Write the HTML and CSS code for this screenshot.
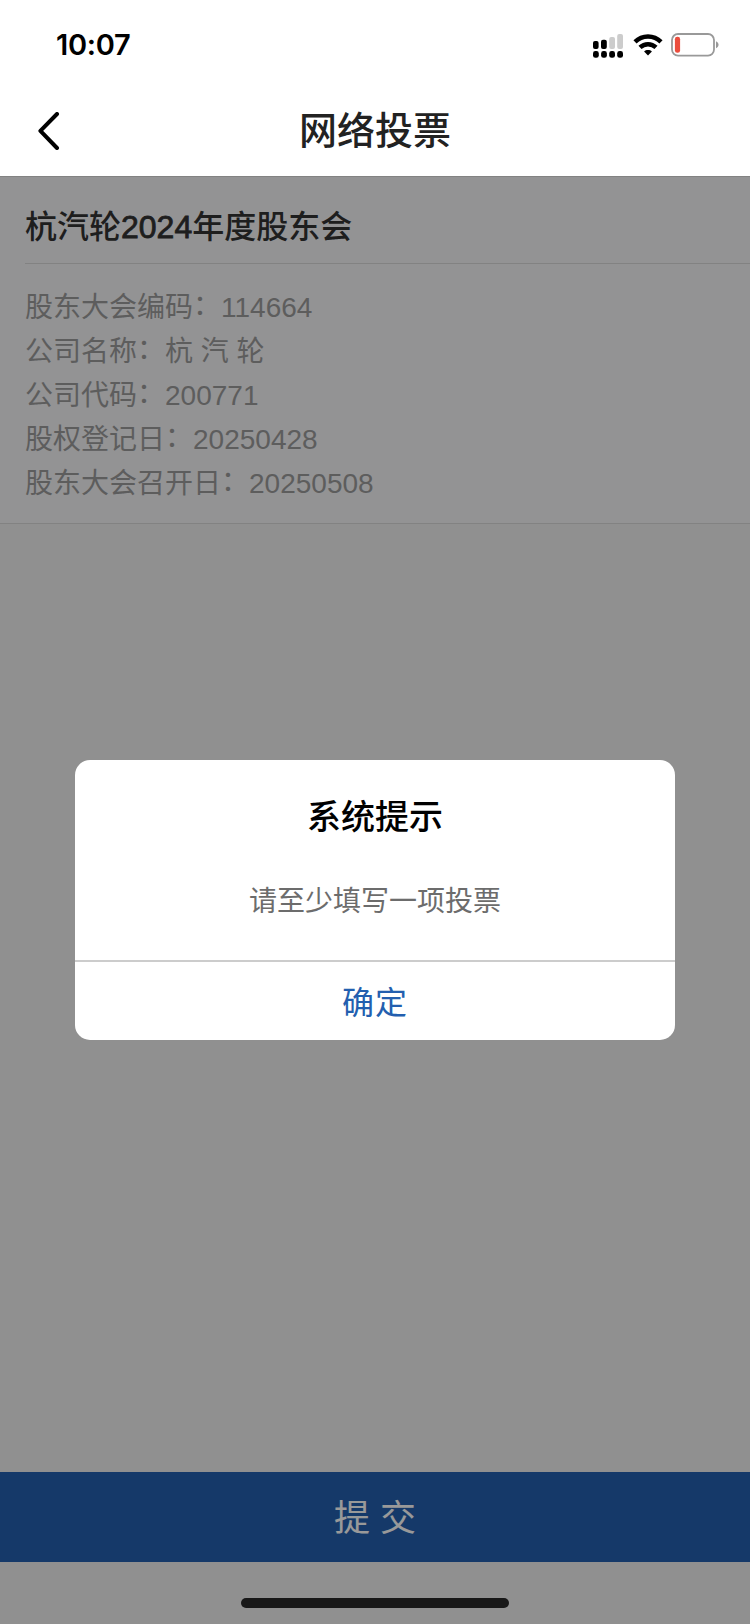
FILE: index.html
```html
<!DOCTYPE html>
<html lang="zh-CN">
<head>
    <meta charset="UTF-8">
    <meta name="viewport" content="width=device-width, initial-scale=1.0">
    <title>网络投票</title>
    <link rel="stylesheet" href="styles.css">
</head>
<body>
    <header class="header">
        <div class="status-bar">
            <span class="time">10:07</span>
            <div class="status-icons">
                <svg class="signal" width="30" height="24" viewBox="0 0 30 24">
                    <g fill="#000">
                        <rect x="0" y="7" width="5.6" height="8" rx="2"/>
                        <rect x="8" y="5.7" width="5.8" height="9.3" rx="2"/>
                        <rect x="0" y="17" width="5.8" height="6.8" rx="2.4"/>
                        <rect x="8.1" y="17" width="5.8" height="6.8" rx="2.4"/>
                        <rect x="16.2" y="17" width="5.8" height="6.8" rx="2.4"/>
                        <rect x="24.2" y="17" width="5.8" height="6.8" rx="2.4"/>
                    </g>
                    <g fill="#ccc">
                        <rect x="16.2" y="3" width="5.8" height="12" rx="2"/>
                        <rect x="24.2" y="0" width="5.8" height="15" rx="2"/>
                    </g>
                </svg>
                <svg class="wifi" width="30" height="22" viewBox="0 0 30 22">
                    <g fill="none" stroke="#000" stroke-width="4.4">
                        <path d="M2 7.9C9.2 .7 20.8 .7 28 7.9"/>
                        <path d="M7 13.4C11.5 9.1 18.5 9.1 23 13.4"/>
                    </g>
                    <path d="M15 21.4l-3.9-3.9c2.1-1.9 5.7-1.9 7.8 0z"/>
                </svg>
                <svg class="battery" width="48" height="24" viewBox="0 0 48 24">
                    <rect x="1" y="1" width="42" height="21.6" rx="6" fill="none" stroke="#999" stroke-width="1.8"/>
                    <rect x="3.9" y="3.8" width="5.2" height="16" rx="2.4" fill="#eb4d3d"/>
                    <path d="M45 8.2c3.4 1.4 3.4 5.6 0 7z" fill="#999"/>
                </svg>
            </div>
        </div>
        <div class="nav-bar">
            <svg class="back" width="22" height="38" viewBox="0 0 22 38">
                <path d="M19 2L2.4 18.8L19 36" fill="none" stroke="#000" stroke-width="4" stroke-linecap="round" stroke-linejoin="round"/>
            </svg>
            <h1>网络投票</h1>
        </div>
    </header>

    <main class="content">
        <section class="meeting">
            <h2>杭汽轮<span class="year">2024</span>年度股东会</h2>
            <ul class="info">
                <li>股东大会编码<i>：</i>114664</li>
                <li>公司名称<i>：</i>杭 汽 轮</li>
                <li>公司代码<i>：</i>200771</li>
                <li>股权登记日<i>：</i>20250428</li>
                <li>股东大会召开日<i>：</i>20250508</li>
            </ul>
        </section>
        <button class="submit">提 交</button>

        <div class="mask">
            <div class="dialog">
                <h3>系统提示</h3>
                <p>请至少填写一项投票</p>
                <button class="confirm">确定</button>
            </div>
        </div>
        <div class="home-indicator"></div>
    </main>
</body>
</html>
```

FILE: styles.css
```css
* {
    box-sizing: border-box;
    margin: 0;
    padding: 0;
}
body {
    display: flex;
    flex-direction: column;
    height: 1624px;
    font-family: "Liberation Sans", "Noto Sans CJK SC", sans-serif;
    background: #fff;
}
button {
    border: none;
    background: none;
    font-family: inherit;
}
.header {
    height: 176px;
}
.status-bar {
    display: flex;
    justify-content: space-between;
    height: 88px;
    padding: 0 31px 0 56px;
}
.time {
    font: 600 29px/90px Inter, sans-serif;
    letter-spacing: -0.3px;
}
.status-icons {
    display: flex;
    padding-top: 33px;
}
.signal {
    margin-top: 1px;
}
.wifi {
    margin: 1px 8px 0 10px;
}
.nav-bar {
    display: grid;
    grid-template-columns: 100px 1fr 100px;
    align-items: center;
    height: 86px;
}
.back {
    margin-left: 38px;
}
.nav-bar h1 {
    font-size: 38px;
    font-weight: 500;
    line-height: 86px;
    text-align: center;
    color: #222;
}
.content {
    position: relative;
    display: flex;
    flex: 1;
    flex-direction: column;
    justify-content: space-between;
    padding-bottom: 62px;
    background: #f1f1f1;
}
.meeting {
    height: 348px;
    border-top: 1px solid #d9d9d9;
    border-bottom: 1px solid #d9d9d9;
    padding-left: 25px;
    background: #f5f5f7;
}
.meeting h2 {
    height: 87px;
    border-bottom: 1px solid #d9d9d9;
    font-size: 32px;
    font-weight: 500;
    line-height: 101px;
    color: #333;
}
.year {
    -webkit-text-stroke: 0.8px #333;
}
.info {
    padding-top: 21px;
    list-style: none;
}
.info li {
    height: 44px;
    font-size: 28px;
    line-height: 45px;
    color: #9c9c9c;
}
.info i {
    position: relative;
    top: -2px;
    font-style: normal;
}
.submit {
    height: 90px;
    padding-top: 2px;
    font-size: 36px;
    line-height: 90px;
    color: #fff;
    background: #235faf;
}
.mask {
    position: absolute;
    inset: 0;
    padding-top: 584px;
    background: rgba(0, 0, 0, 0.4);
}
.dialog {
    width: 600px;
    height: 280px;
    margin: 0 auto;
    border-radius: 15px;
    text-align: center;
    background: #fff;
    overflow: hidden;
}
.dialog h3 {
    height: 112px;
    font-size: 34px;
    font-weight: 500;
    line-height: 114px;
    color: #000;
}
.dialog p {
    height: 88px;
    font-size: 28px;
    line-height: 60px;
    color: #6c6c6c;
}
.confirm {
    width: 100%;
    height: 80px;
    padding-top: 2px;
    border-top: 2px solid #ccc;
    font-size: 32px;
    line-height: 78px;
    letter-spacing: 1px;
    color: #235faf;
}
.home-indicator {
    position: absolute;
    bottom: 16px;
    left: 241px;
    width: 268px;
    height: 10px;
    border-radius: 5px;
    background: #181818;
}
```
